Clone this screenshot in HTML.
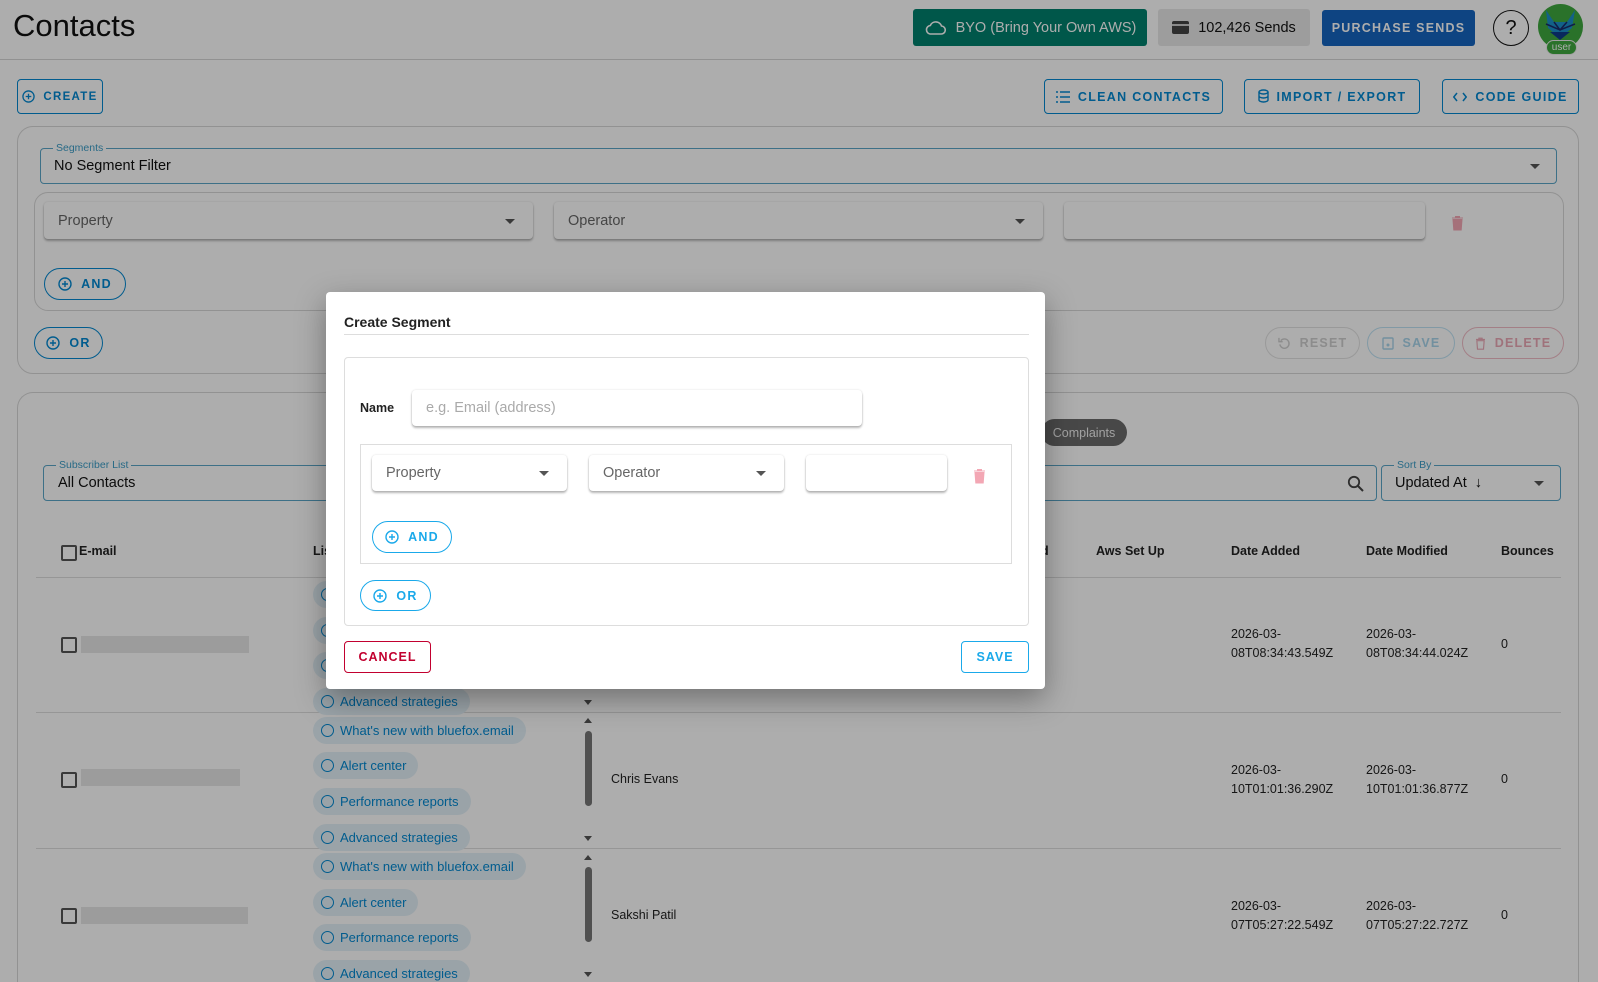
<!DOCTYPE html>
<html><head><meta charset="utf-8"><style>
*{box-sizing:border-box;margin:0;padding:0}
html,body{width:1598px;height:982px;overflow:hidden}
body{background:#fff;font-family:"Liberation Sans",Arial,sans-serif;color:#222}
#w{position:relative;width:1598px;height:982px;overflow:hidden}
.a{position:absolute}
.ob{position:absolute;border:1px solid #0288d1;color:#0288d1;border-radius:4px;font-size:12.5px;font-weight:bold;letter-spacing:1.3px;display:flex;align-items:center;justify-content:center;gap:8px}
.pill{position:absolute;border:1px solid #0288d1;color:#0288d1;border-radius:18px;font-size:12.5px;font-weight:bold;letter-spacing:1.2px;display:flex;align-items:center;justify-content:center;gap:9px}
.sel{position:absolute;background:#fff;border-radius:4px;box-shadow:0 2px 2px rgba(0,0,0,.28),0 0 2px rgba(0,0,0,.12);font-size:14.5px;color:#666;display:flex;align-items:center;padding-left:14px}
.tri{position:absolute;right:18px;top:50%;margin-top:-2px;width:0;height:0;border-left:5px solid transparent;border-right:5px solid transparent;border-top:5px solid #555}
.outl{position:absolute;border:1px solid #5aa6c8;border-radius:4px}
.lbl{position:absolute;top:-7px;left:12px;background:#fff;padding:0 3px;font-size:10.5px;color:#3b9cc6;line-height:12px}
.th{position:absolute;top:544px;font-size:12.5px;font-weight:bold;color:#222}
.chip{position:absolute;left:313px;height:27px;border-radius:14px;background:#e3f1f8;color:#0288d1;font-size:13px;display:flex;align-items:center;padding:0 12px 0 8px;gap:6px;white-space:nowrap}
.chip i{display:inline-block;width:13px;height:13px;border:1.5px solid #0288d1;border-radius:50%}
.cb{position:absolute;left:61px;width:16px;height:16px;border:2px solid #555;border-radius:2px}
.red{position:absolute;left:81px;height:17px;background:#e6e6e6}
.td{position:absolute;font-size:12.5px;color:#222;line-height:19px}
</style></head><body><div id="w">

<div class="a" style="left:13px;top:8px;font-size:31px;color:#111">Contacts</div>
<div class="a" style="left:0;top:59px;width:1598px;height:1px;background:#d6d6d6"></div>
<div class="a" style="left:913px;top:9px;width:234px;height:37px;background:#00816d;border-radius:3px;color:#fff;font-size:14.5px;display:flex;align-items:center;justify-content:center;gap:10px">
<svg width="22" height="16" viewBox="0 0 22 16"><path d="M6 14h11a4 4 0 0 0 .5-8A6 6 0 0 0 6.3 5.5 4.3 4.3 0 0 0 6 14z" fill="none" stroke="#fff" stroke-width="1.6"/></svg>BYO (Bring Your Own AWS)</div>
<div class="a" style="left:1158px;top:9px;width:152px;height:37px;background:#e8e8e8;border-radius:3px;color:#111;font-size:14.5px;display:flex;align-items:center;justify-content:center;gap:9px"><span style="display:inline-block;width:17px;height:13px;background:#444;border-radius:2px;border-top:3px solid #444;box-shadow:inset 0 2px 0 #ccc"></span>102,426 Sends</div>
<div class="a" style="left:1322px;top:10px;width:153px;height:36px;background:#1565c0;border-radius:3px;color:#fff;font-size:12.5px;font-weight:bold;letter-spacing:1.2px;display:flex;align-items:center;justify-content:center">PURCHASE SENDS</div>
<div class="a" style="left:1493px;top:10px;width:36px;height:36px;border:1.5px solid #111;border-radius:50%;font-size:20px;display:flex;align-items:center;justify-content:center;color:#111">?</div>
<div class="a" style="left:1538px;top:4px;width:45px;height:45px;border-radius:50%;background:#3fa83f;overflow:hidden">
<svg width="45" height="45" viewBox="0 0 45 45"><path d="M8 6l8 12h13l8-12-3 18-12 10-12-10z" fill="#1b8fc9"/><path d="M16 18l6 8 7-8M8 20l14 6 15-6" fill="none" stroke="#1a2a6a" stroke-width="1.5"/><path d="M12 28l10 8 10-8" fill="#0d3c8a"/></svg></div>
<div class="a" style="left:1546px;top:40px;width:31px;height:15px;border-radius:8px;background:#3fa83f;border:1px solid #eee;color:#fff;font-size:10px;text-align:center;line-height:13px">user</div>

<div class="ob" style="left:17px;top:79px;width:86px;height:35px;font-size:11.5px"><svg width="13" height="13" viewBox="0 0 14 14"><circle cx="7" cy="7" r="6" fill="none" stroke="#0288d1" stroke-width="1.4"/><path d="M7 4v6M4 7h6" stroke="#0288d1" stroke-width="1.4"/></svg>CREATE</div>
<div class="ob" style="left:1044px;top:79px;width:179px;height:35px"><svg width="14" height="12" viewBox="0 0 14 12"><path d="M0 1h2M4 1h10M0 6h2M4 6h10M0 11h2M4 11h10" stroke="#0288d1" stroke-width="1.6"/></svg>CLEAN CONTACTS</div>
<div class="ob" style="left:1244px;top:79px;width:176px;height:35px"><svg width="11" height="15" viewBox="0 0 11 15"><ellipse cx="5.5" cy="3" rx="4.5" ry="2" fill="none" stroke="#0288d1" stroke-width="1.4"/><path d="M1 3v8c0 1 2 2 4.5 2s4.5-1 4.5-2V3M1 7c0 1 2 2 4.5 2S10 8 10 7" fill="none" stroke="#0288d1" stroke-width="1.4"/></svg>IMPORT / EXPORT</div>
<div class="ob" style="left:1442px;top:79px;width:137px;height:35px"><svg width="14" height="10" viewBox="0 0 14 10"><path d="M4 1L0.8 5 4 9M10 1l3.2 4L10 9" fill="none" stroke="#0288d1" stroke-width="1.5"/></svg>CODE GUIDE</div>

<div class="a" style="left:17px;top:126px;width:1562px;height:248px;border:1px solid #d8d8d8;border-radius:16px"></div>
<div class="outl" style="left:40px;top:148px;width:1517px;height:36px"><div class="lbl">Segments</div><div class="a" style="left:13px;top:9px;font-size:14.5px;color:#111">No Segment Filter</div><div class="tri" style="right:16px"></div></div>
<div class="a" style="left:34px;top:192px;width:1530px;height:119px;border:1px solid #d8d8d8;border-radius:14px"></div>
<div class="sel" style="left:44px;top:202px;width:489px;height:37px">Property<div class="tri"></div></div>
<div class="sel" style="left:554px;top:202px;width:489px;height:37px">Operator<div class="tri"></div></div>
<div class="sel" style="left:1064px;top:202px;width:361px;height:37px"></div>
<svg class="a" style="left:1451px;top:215px" width="13" height="16" viewBox="0 0 13 16"><path d="M1 3h11M4.5 3V1.5h4V3M2 4.5h9l-.8 10.5H2.8z" fill="#f3a7b4" stroke="#f3a7b4"/></svg>
<div class="pill" style="left:44px;top:268px;width:82px;height:32px"><svg width="14" height="14" viewBox="0 0 14 14"><circle cx="7" cy="7" r="6" fill="none" stroke="#0288d1" stroke-width="1.4"/><path d="M7 4v6M4 7h6" stroke="#0288d1" stroke-width="1.4"/></svg>AND</div>
<div class="pill" style="left:34px;top:327px;width:69px;height:32px"><svg width="14" height="14" viewBox="0 0 14 14"><circle cx="7" cy="7" r="6" fill="none" stroke="#0288d1" stroke-width="1.4"/><path d="M7 4v6M4 7h6" stroke="#0288d1" stroke-width="1.4"/></svg>OR</div>
<div class="pill" style="left:1265px;top:327px;width:95px;height:32px;border-color:#e2e2e2;color:#cfcfcf"><svg width="13" height="13" viewBox="0 0 14 14"><path d="M3 4a5 5 0 1 1-1 4" fill="none" stroke="#cfcfcf" stroke-width="1.5"/><path d="M1 1v4h4" fill="none" stroke="#cfcfcf" stroke-width="1.5"/></svg>RESET</div>
<div class="pill" style="left:1367px;top:327px;width:88px;height:32px;border-color:#bfe2f3;color:#a9d4ea"><svg width="12" height="13" viewBox="0 0 12 13"><rect x="1" y="1" width="10" height="11" rx="1" fill="none" stroke="#a9d4ea" stroke-width="1.4"/><circle cx="6" cy="8" r="1.5" fill="#a9d4ea"/></svg>SAVE</div>
<div class="pill" style="left:1462px;top:327px;width:102px;height:32px;border-color:#f0bcc6;color:#eba8b6"><svg width="11" height="13" viewBox="0 0 13 16"><path d="M1 3h11M4.5 3V1.5h4V3M2 4.5h9l-.8 10.5H2.8z" fill="none" stroke="#eba8b6" stroke-width="1.4"/></svg>DELETE</div>

<div class="a" style="left:17px;top:392px;width:1562px;height:590px;border:1px solid #d8d8d8;border-bottom:none;border-radius:16px 16px 0 0"></div>
<div class="a" style="left:1041px;top:419px;width:86px;height:27px;border-radius:14px;background:#6b6b6b;color:#eee;font-size:12.5px;display:flex;align-items:center;justify-content:center">Complaints</div>
<div class="outl" style="left:43px;top:465px;width:1334px;height:36px"><div class="lbl">Subscriber List</div><div class="a" style="left:14px;top:9px;font-size:14.5px;color:#111">All Contacts</div>
<svg class="a" style="right:12px;top:9px" width="17" height="17" viewBox="0 0 17 17"><circle cx="7" cy="7" r="5.2" fill="none" stroke="#444" stroke-width="1.8"/><path d="M11 11l5 5" stroke="#444" stroke-width="2"/></svg></div>
<div class="outl" style="left:1381px;top:465px;width:180px;height:36px"><div class="lbl">Sort By</div><div class="a" style="left:13px;top:9px;font-size:14.5px;color:#111">Updated At &nbsp;↓</div><div class="tri" style="right:16px"></div></div>

<div class="cb" style="top:545px"></div>
<div class="th" style="left:79px">E-mail</div>
<div class="th" style="left:313px">List</div>
<div class="th" style="left:1041px">d</div>
<div class="th" style="left:1096px">Aws Set Up</div>
<div class="th" style="left:1231px">Date Added</div>
<div class="th" style="left:1366px">Date Modified</div>
<div class="th" style="left:1501px">Bounces</div>
<div class="a" style="left:36px;top:577px;width:1525px;height:1px;background:#ddd"></div>
<div class="a" style="left:36px;top:712px;width:1525px;height:1px;background:#ddd"></div>
<div class="a" style="left:36px;top:848px;width:1525px;height:1px;background:#ddd"></div>

<div class="cb" style="top:637px"></div><div class="red" style="top:636px;width:168px"></div>
<div class="chip" style="top:581px"><i></i>What's new with bluefox.email</div>
<div class="chip" style="top:617px"><i></i>Alert center</div>
<div class="chip" style="top:652px"><i></i>Performance reports</div>
<div class="chip" style="top:688px"><i></i>Advanced strategies</div>
<div class="td" style="left:1231px;top:625px">2026-03-<br>08T08:34:43.549Z</div>
<div class="td" style="left:1366px;top:625px">2026-03-<br>08T08:34:44.024Z</div>
<div class="td" style="left:1501px;top:635px">0</div>
<div class="a" style="left:584px;top:700px;border-left:4px solid transparent;border-right:4px solid transparent;border-top:5px solid #555"></div>

<div class="cb" style="top:772px"></div><div class="red" style="top:769px;width:159px"></div>
<div class="chip" style="top:717px"><i></i>What's new with bluefox.email</div>
<div class="chip" style="top:752px"><i></i>Alert center</div>
<div class="chip" style="top:788px"><i></i>Performance reports</div>
<div class="chip" style="top:824px"><i></i>Advanced strategies</div>
<div class="a" style="left:584px;top:718px;border-left:4px solid transparent;border-right:4px solid transparent;border-bottom:5px solid #555"></div>
<div class="a" style="left:585px;top:731px;width:7px;height:75px;border-radius:4px;background:#777"></div>
<div class="a" style="left:584px;top:836px;border-left:4px solid transparent;border-right:4px solid transparent;border-top:5px solid #555"></div>
<div class="td" style="left:611px;top:770px">Chris Evans</div>
<div class="td" style="left:1231px;top:761px">2026-03-<br>10T01:01:36.290Z</div>
<div class="td" style="left:1366px;top:761px">2026-03-<br>10T01:01:36.877Z</div>
<div class="td" style="left:1501px;top:770px">0</div>

<div class="cb" style="top:908px"></div><div class="red" style="top:907px;width:167px"></div>
<div class="chip" style="top:853px"><i></i>What's new with bluefox.email</div>
<div class="chip" style="top:889px"><i></i>Alert center</div>
<div class="chip" style="top:924px"><i></i>Performance reports</div>
<div class="a" style="left:0;top:955px;width:700px;height:27px;overflow:hidden">
 <div class="chip" style="top:5px"><i></i>Advanced strategies</div>
 <div class="a" style="left:584px;top:17px;border-left:4px solid transparent;border-right:4px solid transparent;border-top:5px solid #555"></div>
</div>
<div class="a" style="left:584px;top:855px;border-left:4px solid transparent;border-right:4px solid transparent;border-bottom:5px solid #555"></div>
<div class="a" style="left:585px;top:867px;width:7px;height:75px;border-radius:4px;background:#777"></div>
<div class="td" style="left:611px;top:906px">Sakshi Patil</div>
<div class="td" style="left:1231px;top:897px">2026-03-<br>07T05:27:22.549Z</div>
<div class="td" style="left:1366px;top:897px">2026-03-<br>07T05:27:22.727Z</div>
<div class="td" style="left:1501px;top:906px">0</div>

<div class="a" style="left:0;top:0;width:1598px;height:982px;background:rgba(0,0,0,.32)"></div>

<div class="a" style="left:326px;top:292px;width:719px;height:397px;background:#fff;border-radius:4px;box-shadow:0 10px 30px rgba(0,0,0,.35)">
 <div class="a" style="left:18px;top:22px;font-size:14px;font-weight:bold;color:#222">Create Segment</div>
 <div class="a" style="left:18px;top:42px;width:685px;height:1px;background:#ddd"></div>
 <div class="a" style="left:18px;top:65px;width:685px;height:269px;border:1px solid #ddd;border-radius:4px"></div>
 <div class="a" style="left:34px;top:109px;font-size:12.5px;font-weight:bold;color:#222">Name</div>
 <div class="sel" style="left:86px;top:98px;width:450px;height:36px;color:#aaa">e.g. Email (address)</div>
 <div class="a" style="left:34px;top:152px;width:652px;height:120px;border:1px solid #ddd"></div>
 <div class="sel" style="left:46px;top:163px;width:195px;height:36px">Property<div class="tri"></div></div>
 <div class="sel" style="left:263px;top:163px;width:195px;height:36px">Operator<div class="tri"></div></div>
 <div class="sel" style="left:480px;top:163px;width:141px;height:36px"></div>
 <svg class="a" style="left:647px;top:176px" width="13" height="16" viewBox="0 0 13 16"><path d="M1 3h11M4.5 3V1.5h4V3M2 4.5h9l-.8 10.5H2.8z" fill="#f3a7b4" stroke="#f3a7b4"/></svg>
 <div class="pill" style="left:46px;top:229px;width:80px;height:32px;border-color:#1aa9ea;color:#1aa9ea"><svg width="14" height="14" viewBox="0 0 14 14"><circle cx="7" cy="7" r="6" fill="none" stroke="#1aa9ea" stroke-width="1.4"/><path d="M7 4v6M4 7h6" stroke="#1aa9ea" stroke-width="1.4"/></svg>AND</div>
 <div class="pill" style="left:34px;top:288px;width:71px;height:31px;border-color:#1aa9ea;color:#1aa9ea"><svg width="14" height="14" viewBox="0 0 14 14"><circle cx="7" cy="7" r="6" fill="none" stroke="#1aa9ea" stroke-width="1.4"/><path d="M7 4v6M4 7h6" stroke="#1aa9ea" stroke-width="1.4"/></svg>OR</div>
 <div class="ob" style="left:18px;top:349px;width:87px;height:32px;border-color:#c2002f;color:#c2002f;letter-spacing:1px">CANCEL</div>
 <div class="ob" style="left:635px;top:349px;width:68px;height:32px;border-color:#1aa9ea;color:#1aa9ea;letter-spacing:1px">SAVE</div>
</div>
</div></body></html>
